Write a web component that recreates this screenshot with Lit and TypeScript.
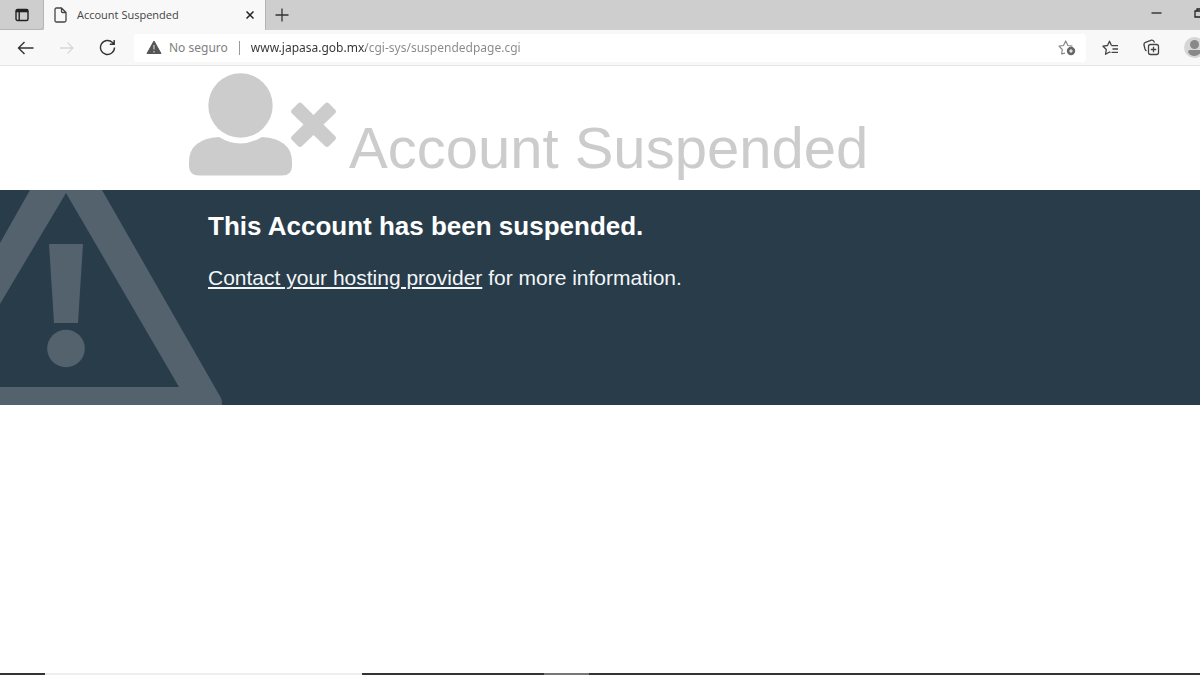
import { LitElement, html, css } from "lit";
import { customElement } from "lit/decorators.js";

@customElement("browser-tabs")
class BrowserTabs extends LitElement {
  static styles = css`
    :host {
      display: flex;
      height: 30px;
      background: #cecece;
      overflow: hidden;
      color: #222;
      font: 11px/14px "Open Sans", "Noto Sans", sans-serif;
    }
    button {
      display: flex;
      align-items: center;
      justify-content: center;
      flex: none;
      padding: 0;
      border: 0;
      background: none;
      color: inherit;
    }
    svg {
      display: block;
      flex: none;
    }
    .menu {
      width: 44px;
      border-right: 1px solid #b4b4b4;
      border-bottom: 1px solid #b4b4b4;
      border-radius: 0 0 4px 0;
      box-sizing: border-box;
    }
    .tab {
      display: flex;
      align-items: center;
      flex: none;
      gap: 10px;
      width: 222px;
      box-sizing: border-box;
      padding: 0 7px 0 10px;
      background: #f8f8f8;
      border-right: 1px solid #b4b4b4;
    }
    .title {
      flex: 1;
      color: #444;
      white-space: nowrap;
    }
    .close {
      width: 16px;
      height: 16px;
    }
    .add {
      width: 32px;
    }
    .window {
      display: flex;
      gap: 32px;
      margin-left: auto;
      margin-right: -6px;
      padding-bottom: 4px;
    }
  `;

  render() {
    return html`
      <button class="menu" aria-label="Tab actions">
        <svg width="14" height="14" viewBox="0 0 14 14" fill="none" stroke="#222" stroke-width="1.4">
          <rect x="1" y="1.5" width="12" height="11" rx="1.5" />
          <path d="M1 3h12" stroke-width="2.6" />
          <path d="M4.2 4v8" />
        </svg>
      </button>
      <div class="tab">
        <svg width="13" height="16" viewBox="0 0 13 16" fill="none" stroke="#444" stroke-width="1.3" stroke-linejoin="round">
          <path d="M2.5 1H7.5L12 5.5V13.5Q12 15 10.500 15H2.500Q1 15 1 13.500V2.500Q1 1 2.500 1ZM7.500 1V4.500Q7.500 5.500 8.500 5.500H12" />
        </svg>
        <span class="title">Account Suspended</span>
        <button class="close" aria-label="Close tab">
          <svg width="8" height="8" viewBox="0 0 8 8" stroke="#222" stroke-width="1.5">
            <path d="M.5 .5l7 7M7.500 .5l-7 7" />
          </svg>
        </button>
      </div>
      <button class="add" aria-label="New tab">
        <svg width="14" height="14" viewBox="0 0 14 14" stroke="#333" stroke-width="1.3">
          <path d="M7 .5v13M.5 7h13" />
        </svg>
      </button>
      <div class="window">
        <button aria-label="Minimize">
          <svg width="11" height="10" viewBox="0 0 11 10" stroke="#222" stroke-width="1.3">
            <path d="M0.500 5h10" />
          </svg>
        </button>
        <button aria-label="Restore">
          <svg width="12" height="10" viewBox="0 0 12 10" fill="none" stroke="#222" stroke-width="1.3">
            <path d="M1 3h8v6H1zM3 3V1h8v6H9" />
          </svg>
        </button>
      </div>
    `;
  }
}

@customElement("browser-toolbar")
class BrowserToolbar extends LitElement {
  static styles = css`
    :host {
      display: flex;
      align-items: center;
      gap: 24px;
      height: 36px;
      box-sizing: border-box;
      padding-left: 17px;
      background: #f8f8f8;
      border-bottom: 1px solid #e6e6e6;
      overflow: hidden;
      font: 12px/16px "Noto Sans", "Open Sans", sans-serif;
    }
    button {
      flex: none;
      padding: 0;
      border: 0;
      background: none;
    }
    svg {
      display: block;
      flex: none;
    }
    .address {
      display: flex;
      align-items: center;
      flex: 1;
      gap: 7px;
      height: 28px;
      padding: 0 10px 0 12px;
      border-radius: 4px;
      background: #fff;
    }
    .security {
      color: #808080;
      white-space: nowrap;
    }
    .rule {
      width: 1px;
      height: 14px;
      margin: 0 4px;
      background: #999;
    }
    .url {
      flex: 1;
      min-width: 0;
      padding: 0;
      border: 0;
      outline: 0;
      font: inherit;
      color: transparent;
      background: linear-gradient(90deg, #333 115px, #888 115px);
      -webkit-background-clip: text;
      background-clip: text;
    }
    .nav {
      display: flex;
      align-items: center;
      gap: 24px;
      margin-right: -6px;
    }
    .tools {
      display: flex;
      align-items: center;
      gap: 24px;
      margin: 0 -5px 0 -8px;
    }
  `;

  render() {
    return html`
      <div class="nav">
        <button aria-label="Back">
          <svg width="17" height="14" viewBox="0 0 17 14" fill="none" stroke="#333" stroke-width="1.4">
            <path d="M16.500 7H1.500M7.500 1L1.500 7L7.500 13" />
          </svg>
        </button>
        <button aria-label="Forward" disabled>
          <svg width="17" height="14" viewBox="0 0 17 14" fill="none" stroke="#d8d8d8" stroke-width="1.3">
            <path d="M2 7H15M9.500 1.500L15 7L9.500 12.500" />
          </svg>
        </button>
        <button aria-label="Refresh">
          <svg width="17" height="17" viewBox="0 0 17 17" fill="none" stroke="#333" stroke-width="1.4">
            <path d="M15.500 8.500A7 7 0 1 1 13.500 3.600L15 5M15.200 1V5.200H10.800" />
          </svg>
        </button>
      </div>
      <div class="address">
        <svg width="16" height="15" viewBox="0 0 16 15">
          <path d="M8 1L15 13.500H1Z" fill="#555" stroke="#555" stroke-width="1" stroke-linejoin="round" />
          <path d="M8 5v4.500M8 11v1.500" stroke="#bbb" stroke-width="1.400" />
        </svg>
        <label class="security" for="url">No seguro</label>
        <span class="rule"></span>
        <input class="url" id="url" type="text" value="www.japasa.gob.mx/cgi-sys/suspendedpage.cgi" />
        <button aria-label="Add to favorites">
          <svg width="18" height="17" viewBox="0 0 18 17" fill="none" stroke="#888" stroke-width="1.200" stroke-linejoin="round">
            <path d="M7 14.200L3.600 15L4.300 10.500L1 7.200L5.500 6.500L7.700 2L9.900 6.500L14.400 7.200" />
            <circle cx="13" cy="12" r="4.200" fill="#666" stroke="none" />
            <path d="M13 10.200v3.600M11.200 12h3.600" stroke="#fff" />
          </svg>
        </button>
      </div>
      <div class="tools">
        <button aria-label="Favorites">
          <svg width="17" height="16" viewBox="0 0 17 16" fill="none" stroke="#444" stroke-width="1.300" stroke-linejoin="round">
            <path d="M9.500 5.500L7.500 1.200L5.500 5.500L1 6.200L4.300 9.500L3.500 14.300L7.500 12L8.500 12.500M9.500 5.700H16M10.500 9H16M9.500 12.300H16" />
          </svg>
        </button>
        <button aria-label="Collections">
          <svg width="17" height="17" viewBox="0 0 17 17" fill="none" stroke="#444" stroke-width="1.300" stroke-linejoin="round">
            <rect x="5.500" y="5.500" width="10" height="10" rx="2" />
            <path d="M10.500 7.800v5.400M7.800 10.500h5.400M3.500 12Q2.500 11.500 2 10L1 6Q.7 4 2.500 3.300L8.500 1.200Q10.500.8 11.500 3.500" />
          </svg>
        </button>
        <button aria-label="Profile">
          <svg width="21" height="21" viewBox="0 0 21 21">
            <circle cx="10.500" cy="10.500" r="10.500" fill="#d6d6d6" />
            <circle cx="10.500" cy="7.500" r="4.500" fill="#888" />
            <path d="M4 15Q4 13 6 13H15Q17 13 17 15Q15 19 10.500 19T4 15Z" fill="#888" />
          </svg>
        </button>
      </div>
    `;
  }
}

@customElement("suspended-page")
class SuspendedPage extends LitElement {
  static styles = css`
    :host {
      display: block;
      background: #fff;
      font-family: "Liberation Sans", Arial, sans-serif;
    }
    svg {
      display: block;
      flex: none;
    }
    .head {
      display: flex;
      align-items: flex-end;
      gap: 12px;
      padding: 6px 16px 14px 189px;
    }
    h1 {
      margin: 0 0 -6px;
      color: #ccc;
      font-size: 58px;
      line-height: 68px;
      font-weight: 400;
    }
    .banner {
      display: grid;
      grid-template-columns: 208px 1fr;
      background: #293c4a;
      color: #fff;
    }
    .message {
      padding-top: 20px;
    }
    h2 {
      margin: 0 0 20px;
      font-size: 26px;
      line-height: 32px;
    }
    p {
      margin: 0;
      font-size: 21px;
      line-height: 32px;
      color: #f2f6f8;
    }
    a {
      color: inherit;
    }
    .warning {
      overflow: visible;
    }
  `;

  render() {
    return html`
      <header class="head">
        <svg width="148" height="104" viewBox="0 0 148 104" fill="#ccc">
          <circle cx="51.500" cy="33.500" r="32.200" />
          <path d="M30 65Q51 78 73 65Q103 67 103 90V94Q103 103.500 93 103.500H10Q0 103.500 0 94V90Q0 67 30 65Z" />
          <path d="M109 31.500Q111 29.500 113 31.500L124.500 43L136 31.500Q138 29.500 140 31.500L146 37.500Q148 39.500 146 41.500L134.500 52.500L146 64Q148 66 146 68L140 74Q138 76 136 74L124.500 63L113 74Q111 76 109 74L103 68Q101 66 103 64L114.500 52.500L103 41.500Q101 39.500 103 37.500Z" />
        </svg>
        <h1>Account Suspended</h1>
      </header>
      <section class="banner">
        <svg class="warning" width="208" height="215" viewBox="0 0 208 215" fill="#54626e">
          <path fill-rule="evenodd" d="M30 0H102L221 208Q222 210 222 215H0V197H179L66 3L0 114V53Z" />
          <path d="M49 54H83L78 133H54Z" />
          <circle cx="66" cy="158.500" r="18.800" />
        </svg>
        <div class="message">
          <h2>This Account has been suspended.</h2>
          <p><a href="#">Contact your hosting provider</a> for more information.</p>
        </div>
      </section>
    `;
  }
}

@customElement("app-root")
class AppRoot extends LitElement {
  static styles = css`
    :host {
      display: flex;
      flex-direction: column;
      height: 100vh;
      background: #fff;
      overflow: hidden;
    }
    .page {
      flex: 1;
    }
    .taskbar {
      display: flex;
      height: 2px;
      background: #333;
    }
    .start {
      width: 45px;
    }
    .search {
      width: 317px;
      background: #eee;
    }
    .space {
      width: 182px;
    }
    .active {
      width: 45px;
      background: #777;
    }
  `;

  render() {
    return html`
      <browser-tabs></browser-tabs>
      <browser-toolbar></browser-toolbar>
      <suspended-page class="page"></suspended-page>
      <div class="taskbar">
        <span class="start"></span>
        <span class="search"></span>
        <span class="space"></span>
        <span class="active"></span>
      </div>
    `;
  }
}
